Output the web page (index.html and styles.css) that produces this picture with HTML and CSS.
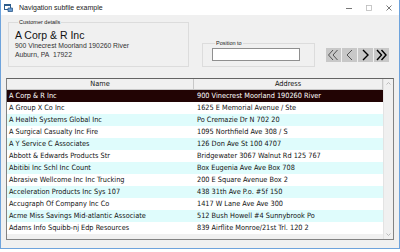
FILE: index.html
```html
<!DOCTYPE html>
<html lang="en">
<head>
	<meta charset="UTF-8">
	<title>Navigation subfile example</title>
	<link rel="stylesheet" href="styles.css">
</head>
<body>
	<div class="window">
		<div class="titlebar">
			<svg class="app-icon" width="9" height="9" viewBox="0 0 9 9">
				<rect x="0.5" y="1.5" width="6" height="5" fill="#fff" stroke="#2d5c8c"/>
				<rect x="0.5" y="1.5" width="6" height="1.5" fill="#2d5c8c"/>
				<path d="M4 5 L8.5 5 L8.5 8.5 L4 8.5 Z" fill="#6a9bd0" stroke="#2d5c8c" stroke-width="0.8"/>
			</svg>
			<span class="title">Navigation subfile example</span>
			<div class="controls">
				<svg width="8" height="8" viewBox="0 0 8 8"><path d="M1 4.5 H7" stroke="#555" stroke-width="0.8"/></svg>
				<svg width="8" height="8" viewBox="0 0 8 8"><rect x="1.5" y="1.5" width="5" height="5" fill="none" stroke="#bbb" stroke-width="0.8"/></svg>
				<svg width="8" height="8" viewBox="0 0 8 8"><path d="M1.5 1.5 L6.5 6.5 M6.5 1.5 L1.5 6.5" stroke="#555" stroke-width="0.8"/></svg>
			</div>
		</div>
		<div class="content">
			<div class="top">
				<fieldset class="customer">
					<legend>Customer details</legend>
					<div class="cust-name">A Corp &amp; R Inc</div>
					<div class="cust-line">900 Vinecrest Moorland 190260 River</div>
					<div class="cust-line">Auburn, PA&nbsp; 17922</div>
				</fieldset>
				<fieldset class="position">
					<legend>Position to</legend>
					<input class="pos-input" type="text">
				</fieldset>
				<div class="nav">
					<button class="navbtn">
						<svg width="13" height="12" viewBox="0 0 13 12"><path d="M6 1 L1.5 6 L6 11 M10.5 1 L6 6 L10.5 11" fill="none" stroke="#444" stroke-width="0.9"/></svg>
					</button>
					<button class="navbtn">
						<svg width="13" height="12" viewBox="0 0 13 12"><path d="M9 1 L4 6 L9 11" fill="none" stroke="#444" stroke-width="0.9"/></svg>
					</button>
					<button class="navbtn">
						<svg width="13" height="12" viewBox="0 0 13 12"><path d="M4 1 L9 6 L4 11" fill="none" stroke="#000" stroke-width="1.4"/></svg>
					</button>
					<button class="navbtn">
						<svg width="13" height="12" viewBox="0 0 13 12"><path d="M2 1 L6.5 6 L2 11 M6.5 1 L11 6 L6.5 11" fill="none" stroke="#000" stroke-width="1.4"/></svg>
					</button>
				</div>
			</div>
			<div class="grid">
				<div class="rows">
					<div class="row head"><div class="cell">Name</div><div class="cell">Address</div></div>
					<div class="row selected"><div class="cell">A Corp &amp; R Inc</div><div class="cell">900 Vinecrest Moorland 190260 River</div></div>
					<div class="row"><div class="cell">A Group X Co Inc</div><div class="cell">1625 E Memorial Avenue / Ste</div></div>
					<div class="row alt"><div class="cell">A Health Systems Global Inc</div><div class="cell">Po Cremazie Dr N 702 20</div></div>
					<div class="row"><div class="cell">A Surgical Casualty Inc Fire</div><div class="cell">1095 Northfield Ave 308 / S</div></div>
					<div class="row alt"><div class="cell">A Y Service C Associates</div><div class="cell">126 Don Ave St 100 4707</div></div>
					<div class="row"><div class="cell">Abbott &amp; Edwards Products Str</div><div class="cell">Bridgewater 3067 Walnut Rd 125 767</div></div>
					<div class="row alt"><div class="cell">Abitibi Inc Schl Inc Count</div><div class="cell">Box Eugenia Ave Ave Box 708</div></div>
					<div class="row"><div class="cell">Abrasive Wellcome Inc Inc Trucking</div><div class="cell">200 E Square Avenue Box 2</div></div>
					<div class="row alt"><div class="cell">Acceleration Products Inc Sys 107</div><div class="cell">438 31th Ave P.o. #5f 150</div></div>
					<div class="row"><div class="cell">Accugraph Of Company Inc Co</div><div class="cell">1417 W Lane Ave Ave 300</div></div>
					<div class="row alt"><div class="cell">Acme Miss Savings Mid-atlantic Associate</div><div class="cell">512 Bush Howell #4 Sunnybrook Po</div></div>
					<div class="row"><div class="cell">Adams Info Squibb-nj Edp Resources</div><div class="cell">839 Airflite Monroe/21st Trl. 120 2</div></div>
				</div>
				<div class="scrollbar">
					<svg width="9" height="9" viewBox="0 0 9 9"><path d="M2.5 5.5 L4.5 3.5 L6.5 5.5" fill="none" stroke="#bbb" stroke-width="1"/></svg>
					<svg width="9" height="9" viewBox="0 0 9 9"><path d="M2.5 3.5 L4.5 5.5 L6.5 3.5" fill="none" stroke="#bbb" stroke-width="1"/></svg>
				</div>
			</div>
		</div>
	</div>
</body>
</html>
```

FILE: styles.css
```css
body {
	margin: 0;
	background: #ffffff;
	font-family: "DejaVu Sans", Tahoma, sans-serif;
}
.window {
	width: 398px;
	height: 248px;
	border: 1px solid #6ea3dc;
	border-top: none;
	background: #f0f0f0;
	display: flex;
	flex-direction: column;
}
.titlebar {
	height: 15px;
	background: #ffffff;
	display: flex;
	align-items: center;
	padding-left: 3px;
}
.app-icon {
	margin-right: 6px;
}
.title {
	font-family: "Liberation Sans", Arial, sans-serif;
	font-size: 7px;
	color: #222;
	flex: 1;
}
.controls {
	display: flex;
	gap: 12px;
	margin-right: 6px;
}
.content {
	flex: 1;
	display: flex;
	flex-direction: column;
}
.top {
	display: flex;
	height: 63px;
	align-items: flex-start;
}
fieldset {
	border: 1px solid #dcdcdc;
	margin: 0;
	padding: 0;
	font-family: "Liberation Sans", Arial, sans-serif;
}
legend {
	font-size: 5.5px;
	color: #222;
	padding: 0 1px;
	margin-left: 3px;
}
.customer {
	margin: 4px 0 0 7px;
	width: 181px;
	height: 48px;
	box-sizing: border-box;
	padding: 4px 6px 0;
}
.cust-name {
	font-size: 10.5px;
	color: #111;
	line-height: 12px;
}
.cust-line {
	font-size: 6.8px;
	color: #333;
	line-height: 9px;
}
.position {
	margin: 25px 0 0 13px;
	width: 113px;
	height: 27px;
	padding: 2px 0 0 9px;
	box-sizing: border-box;
}
.pos-input {
	width: 88px;
	height: 13px;
	box-sizing: border-box;
	border: 1px solid #8f8f8f;
	background: #fff;
	padding: 0;
	display: block;
}
.nav {
	display: flex;
	gap: 1px;
	margin: 33px 0 0 11px;
}
.navbtn {
	width: 15px;
	height: 14px;
	padding: 0;
	border: none;
	background: #c8c8c8;
	display: flex;
	align-items: center;
	justify-content: center;
}
.grid {
	margin: 0 5px 0 5px;
	height: 160px;
	border: 1px solid #828282;
	border-top: 1px solid #646464;
	background: #f0f0f0;
	display: flex;
}
.rows {
	flex: 1;
	border-right: 1px solid #e3e3e3;
	font-family: "DejaVu Sans Condensed", "DejaVu Sans", sans-serif;
	font-size: 7.3px;
	color: #111;
}
.row {
	display: flex;
	height: 12px;
	background: #ffffff;
}
.row.alt {
	background: #dffcfc;
}
.row.selected {
	background: #220404;
	color: #ffffff;
}
.row.head {
	height: 10px;
	background: #f0f0f0;
	border-bottom: 1px solid #c8c8c8;
}
.cell {
	line-height: 12px;
	padding-left: 2px;
	white-space: nowrap;
	overflow: hidden;
}
.cell:first-child {
	width: 186px;
}
.cell:last-child {
	flex: 1;
}
.head .cell {
	line-height: 10px;
	text-align: center;
	padding-left: 0;
	border-right: 1px solid #c8c8c8;
}
.scrollbar {
	width: 9px;
	display: flex;
	flex-direction: column;
	justify-content: space-between;
	background: #f0f0f0;
}
```
